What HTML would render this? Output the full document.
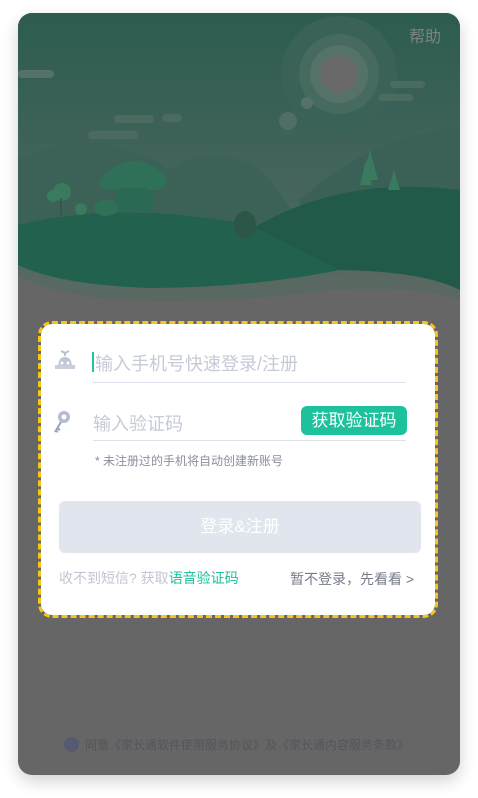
<!DOCTYPE html>
<html><head><meta charset="utf-8"><style>
*{margin:0;padding:0;box-sizing:border-box}
body{width:478px;height:798px;background:#fff;font-family:"Liberation Sans","Noto Sans CJK SC",sans-serif;position:relative;overflow:hidden}
.frame{position:absolute;left:18px;top:13px;width:442px;height:762px;border-radius:14px;background:#666;overflow:hidden;box-shadow:0 6px 16px rgba(0,0,0,.18)}
.card{position:absolute;left:38px;top:321px;width:400px;height:297px;border:3px dashed #f5c518;border-radius:14px;background:#fff;background-clip:padding-box}
.t{position:absolute;white-space:nowrap}
</style></head><body>
<div class="frame">
<svg width="442" height="320" viewBox="18 13 442 320" style="position:absolute;left:0;top:0">
<defs><linearGradient id="sky" x1="0" y1="0" x2="0" y2="1"><stop offset="0" stop-color="#2d5c50"/><stop offset="0.7" stop-color="#48665e"/><stop offset="1" stop-color="#5a6a64"/></linearGradient></defs>
<path d="M18 13 H460 V300 Q420 285 330 290 Q220 305 120 300 Q50 295 18 275 Z" fill="url(#sky)"/>
<circle cx="339" cy="74" r="58" fill="#3b6258"/>
<circle cx="339" cy="74" r="40" fill="#466a60"/>
<circle cx="339" cy="74" r="29" fill="#557268"/>
<circle cx="339" cy="74" r="19" fill="#686868"/>
<circle cx="307" cy="103" r="6" fill="#557268"/>
<circle cx="288" cy="121" r="9" fill="#4f6e64"/>
<rect x="18" y="70" width="36" height="8" rx="4" fill="#557268"/>
<rect x="114" y="115" width="40" height="8" rx="4" fill="#4b6a60"/>
<rect x="88" y="131" width="50" height="8" rx="4" fill="#4b6a60"/>
<rect x="162" y="114" width="20" height="8" rx="4" fill="#4b6a60"/>
<rect x="390" y="81" width="35" height="7" rx="3.5" fill="#4b6a60"/>
<rect x="378" y="94" width="35" height="7" rx="3.5" fill="#4b6a60"/>
<path d="M18 160 Q90 120 170 170 Q210 140 260 170 Q290 200 300 230 L18 260Z" fill="#3c6258"/>
<path d="M300 200 Q380 130 460 130 L460 260 L300 260Z" fill="#3b6058"/>
<path d="M18 275 Q50 292 120 290 Q220 285 330 275 Q420 270 460 290 L460 300 Q420 285 330 290 Q220 305 120 300 Q50 295 18 275Z" fill="#5a6862"/>
<path d="M250 230 Q340 175 460 190 L460 290 Q420 270 330 270 Q260 280 250 230Z" fill="#225a4a"/>
<path d="M18 225 Q120 200 250 225 Q300 250 340 270 Q250 288 150 288 Q60 285 18 265Z" fill="#23614f"/>
<path d="M100 180 Q130 145 165 175 Q170 185 160 190 L105 190 Q98 186 100 180Z" fill="#2f7058"/>
<rect x="115" y="188" width="38" height="24" rx="8" fill="#2a6a54"/>
<ellipse cx="106" cy="208" rx="12" ry="8" fill="#2f7058"/>
<circle cx="62" cy="192" r="9" fill="#3a7a5e"/><circle cx="53" cy="196" r="6" fill="#3a7a5e"/><circle cx="81" cy="209" r="6" fill="#3a7a5e"/>
<path d="M61 198 V215" stroke="#3a4e48" stroke-width="1.5"/>
<path d="M370 150 L378 180 L362 180Z" fill="#3a7a5e"/><path d="M366 160 L372 185 L360 185Z" fill="#3a7a5e"/><path d="M394 170 L400 190 L388 190Z" fill="#3a7a5e"/>
<ellipse cx="245" cy="225" rx="11" ry="14" fill="#2c5648"/>
<text x="441" y="42" font-size="16" fill="#7a8480" text-anchor="end" font-family="Liberation Sans,Noto Sans CJK SC,sans-serif">帮助</text>
</svg>
<div class="t" style="left:46px;top:723px;font-size:12px;color:#55555d"><span style="display:inline-block;width:15px;height:15px;border-radius:50%;background:#565a70;vertical-align:-3px;margin-right:6px"></span>同意《家长通软件使用服务协议》及《家长通内容服务条款》</div>
</div>
<div class="card">
<svg style="position:absolute;left:13px;top:25px" width="22" height="22" viewBox="0 0 22 22"><path d="M11 4 l-4 -2 M11 4 l4 -2 M11 4 v3" stroke="#b8bfd2" stroke-width="2"/><path d="M4 19 Q4 8 11 8 Q18 8 18 19Z" fill="#c0c6d6"/><rect x="1" y="16" width="20" height="4" fill="#c8cedc"/><circle cx="8" cy="14" r="1.5" fill="#fff"/><circle cx="14" cy="14" r="1.5" fill="#fff"/></svg>
<div style="position:absolute;left:51px;top:28px;width:2px;height:20px;background:#25c4a0"></div>
<div class="t" style="left:54px;top:26px;font-size:18px;color:#c6cad6">输入手机号快速登录/注册</div>
<div style="position:absolute;left:52px;top:58px;width:313px;height:1px;background:#dde1ec"></div>
<svg style="position:absolute;left:11px;top:86px" width="20" height="24" viewBox="0 0 20 24"><circle cx="12" cy="7" r="6" fill="#b4bcd2"/><circle cx="12" cy="7" r="2.5" fill="#fff"/><path d="M9 12 L3 22 M5 18 l3 2 M4 21 l2 1" stroke="#9aa3be" stroke-width="2"/></svg>
<div class="t" style="left:52px;top:86px;font-size:18px;color:#c6cad6">输入验证码</div>
<div style="position:absolute;left:260px;top:82px;width:106px;height:29px;border-radius:6px;background:#1dc19c;color:#fff;font-size:17px;line-height:29px;text-align:center">获取验证码</div>
<div style="position:absolute;left:52px;top:116px;width:313px;height:1px;background:#dde1ec"></div>
<div class="t" style="left:54px;top:128px;font-size:12px;color:#8a8e9e">* 未注册过的手机将自动创建新账号</div>
<div style="position:absolute;left:18px;top:177px;width:362px;height:52px;border-radius:6px;background:#e1e5ed;color:#fff;font-size:17px;line-height:52px;text-align:center">登录&amp;注册</div>
<div class="t" style="left:18px;top:244px;font-size:14px;color:#c2c6d0">收不到短信? 获取<span style="color:#1dc19c">语音验证码</span></div>
<div class="t" style="left:249px;top:245px;font-size:14px;color:#777c88">暂不登录，先看看 &gt;</div>
</div>
</body></html>
